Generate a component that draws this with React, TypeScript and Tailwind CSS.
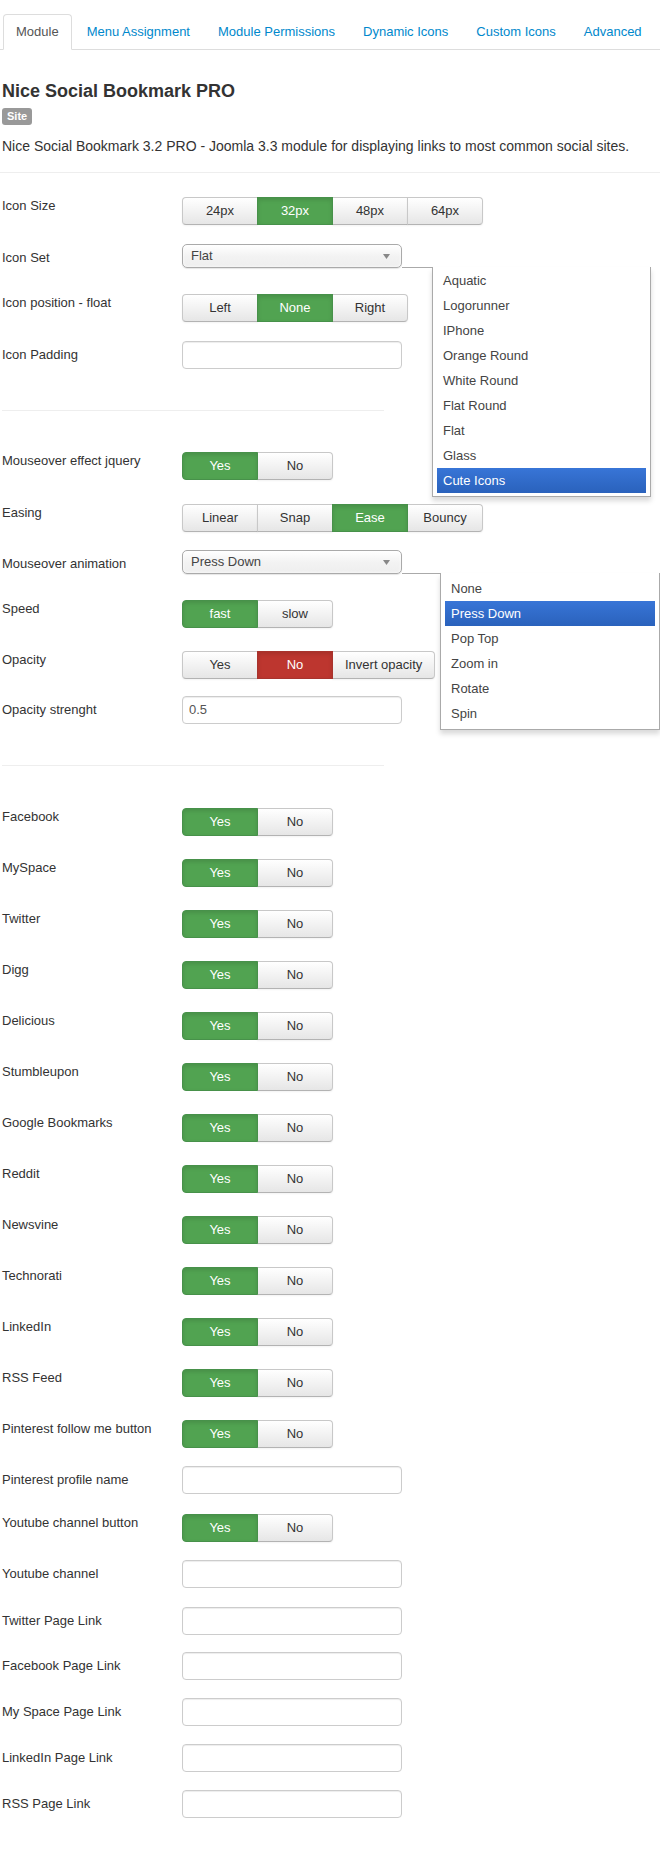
import clsx from 'clsx'

const tabs = ['Module', 'Menu Assignment', 'Module Permissions', 'Dynamic Icons', 'Custom Icons', 'Advanced']

const iconSets = ['Aquatic', 'Logorunner', 'IPhone', 'Orange Round', 'White Round', 'Flat Round', 'Flat', 'Glass', 'Cute Icons']
const animations = ['None', 'Press Down', 'Pop Top', 'Zoom in', 'Rotate', 'Spin']

const socials = [
  'Facebook',
  'MySpace',
  'Twitter',
  'Digg',
  'Delicious',
  'Stumbleupon',
  'Google Bookmarks',
  'Reddit',
  'Newsvine',
  'Technorati',
  'LinkedIn',
  'RSS Feed',
]

type Tone = 'green' | 'red'

function BtnGroup({ items, active, tone = 'green' }: { items: string[]; active: number; tone?: Tone }) {
  return (
    <div className="flex">
      {items.map((label, i) => {
        const on = i === active
        return (
          <button
            key={label}
            type="button"
            className={clsx(
              'h-[28px] min-w-[76px] border px-[12px] text-[13px] leading-[18px]',
              i > 0 && '-ml-px',
              i === 0 && 'rounded-l-[4px]',
              i === items.length - 1 && 'rounded-r-[4px]',
              !on &&
                'border-[#c8c8c8] border-b-[#b3b3b3] bg-linear-to-b from-white to-[#e6e6e6] text-[#333] shadow-[0_1px_2px_rgba(0,0,0,0.05)]',
              on && tone === 'green' && 'relative border-[#47914a] bg-[#51a351] text-white shadow-[inset_0_2px_4px_rgba(0,0,0,0.12)]',
              on && tone === 'red' && 'relative border-[#a8332d] bg-[#bd362f] text-white shadow-[inset_0_2px_4px_rgba(0,0,0,0.12)]',
            )}
          >
            {label}
          </button>
        )
      })}
    </div>
  )
}

function TextInput({ value = '' }: { value?: string }) {
  return (
    <input
      readOnly
      value={value}
      className="h-[28px] w-[220px] rounded-[4px] border border-[#ccc] bg-white px-[6px] text-[13px] text-[#555] shadow-[inset_0_1px_1px_rgba(0,0,0,0.075)] outline-none"
    />
  )
}

function Select({ value }: { value: string }) {
  return (
    <div className="relative h-[24px] w-[220px] rounded-[5px] border border-[#aaa] bg-linear-to-b from-white via-[#f3f3f3] to-[#eee] px-[8px] text-[13px] leading-[22px] text-[#444] shadow-[inset_0_0_3px_white,0_1px_1px_rgba(0,0,0,0.1)]">
      {value}
      <svg className="absolute right-[11px] top-[9px]" width="7" height="5" viewBox="0 0 7 5">
        <path d="M0 0h7L3.5 5z" fill="#888" />
      </svg>
    </div>
  )
}

function DropList({ items, selected, className }: { items: string[]; selected: string; className: string }) {
  return (
    <div
      className={clsx(
        'absolute z-10 border-x border-b border-[#aaa] bg-white shadow-[0_4px_5px_rgba(0,0,0,0.15)]',
        className,
      )}
    >
      <ul className="px-[4px] pb-[3px]">
        {items.map((it) => (
          <li
            key={it}
            className={clsx(
              'h-[25px] px-[6px] py-[5px] text-[13px] leading-[15px]',
              it === selected ? 'bg-linear-to-b from-[#3875d7] to-[#2a62bc] text-white' : 'text-[#444]',
            )}
          >
            {it}
          </li>
        ))}
      </ul>
    </div>
  )
}

function Row({
  label,
  h,
  inset,
  children,
}: {
  label: string
  h: string
  inset?: boolean
  children: React.ReactNode
}) {
  return (
    <div className={clsx('flex items-start', h)}>
      <div className={clsx('w-[180px] shrink-0 text-[13px] leading-[18px] text-[#333]', inset && 'pt-[5px]')}>
        {label}
      </div>
      <div className="relative">{children}</div>
    </div>
  )
}

const yesNo = ['Yes', 'No']

export default function App() {
  return (
    <div className="min-h-[1861px] bg-white px-[2px] pt-[14px] font-[Liberation_Sans,Arial,Helvetica,sans-serif] text-[13px] text-[#333]">
      {/* tabs */}
      <ul className="-mx-[2px] flex border-b border-[#ddd] pl-[3px]">
        {tabs.map((t, i) => (
          <li key={t} className="-mb-px mr-[2px]">
            <span
              className={clsx(
                'block rounded-t-[4px] border px-[12px] py-[8px] leading-[18px]',
                i === 0 ? 'border-[#ddd] border-b-white bg-white text-[#555]' : 'border-transparent text-[#0088cc]',
              )}
            >
              {t}
            </span>
          </li>
        ))}
      </ul>

      <h3 className="mt-[31px] text-[18px] font-bold leading-[20px] text-[#333]">Nice Social Bookmark PRO</h3>
      <span className="mt-[7px] inline-block h-[17px] rounded-[3px] bg-[#999] px-[5px] text-[11px] font-bold leading-[17px] text-white">
        Site
      </span>
      <p className="mt-[11px] text-[14px] leading-[18px]">
        Nice Social Bookmark 3.2 PRO - Joomla 3.3 module for displaying links to most common social sites.
      </p>
      <div className="-mx-[2px] mt-[17px] border-t border-[#eee]" />

      {/* section 1 */}
      <div className="pt-[24px]">
        <Row label="Icon Size" h="h-[47px]">
          <BtnGroup items={['24px', '32px', '48px', '64px']} active={1} />
        </Row>
        <Row label="Icon Set" h="h-[50px]" inset>
          <Select value="Flat" />
          <div className="absolute left-[220px] top-[23px] h-px w-[30px] bg-[#aaa]" />
          <DropList items={iconSets} selected="Cute Icons" className="left-[250px] top-[23px] w-[219px] pt-px" />
        </Row>
        <Row label="Icon position - float" h="h-[47px]">
          <BtnGroup items={['Left', 'None', 'Right']} active={1} />
        </Row>
        <Row label="Icon Padding" h="h-[46px]" inset>
          <TextInput />
        </Row>
      </div>
      <div className="mt-[23px] w-[382px] border-t border-[#eee]" />

      {/* section 2 */}
      <div className="pt-[41px]">
        <Row label="Mouseover effect jquery" h="h-[52px]">
          <BtnGroup items={yesNo} active={0} />
        </Row>
        <Row label="Easing" h="h-[46px]">
          <BtnGroup items={['Linear', 'Snap', 'Ease', 'Bouncy']} active={2} />
        </Row>
        <Row label="Mouseover animation" h="h-[50px]" inset>
          <Select value="Press Down" />
          <div className="absolute left-[220px] top-[23px] h-px w-[38px] bg-[#aaa]" />
          <DropList
            items={animations}
            selected="Press Down"
            className="left-[258px] top-[23px] w-[220px] pt-[3px]"
          />
        </Row>
        <Row label="Speed" h="h-[51px]">
          <BtnGroup items={['fast', 'slow']} active={0} />
        </Row>
        <Row label="Opacity" h="h-[45px]">
          <BtnGroup items={['Yes', 'No', 'Invert opacity']} active={1} tone="red" />
        </Row>
        <Row label="Opacity strenght" h="h-[46px]" inset>
          <TextInput value="0.5" />
        </Row>
      </div>
      <div className="mt-[23px] w-[382px] border-t border-[#eee]" />

      {/* section 3 */}
      <div className="pt-[42px]">
        {socials.map((s) => (
          <Row key={s} label={s} h="h-[51px]">
            <BtnGroup items={yesNo} active={0} />
          </Row>
        ))}
        <Row label="Pinterest follow me button" h="h-[46px]">
          <BtnGroup items={yesNo} active={0} />
        </Row>
        <Row label="Pinterest profile name" h="h-[48px]" inset>
          <TextInput />
        </Row>
        <Row label="Youtube channel button" h="h-[46px]">
          <BtnGroup items={yesNo} active={0} />
        </Row>
        <Row label="Youtube channel" h="h-[47px]" inset>
          <TextInput />
        </Row>
        <Row label="Twitter Page Link" h="h-[45px]" inset>
          <TextInput />
        </Row>
        <Row label="Facebook Page Link" h="h-[46px]" inset>
          <TextInput />
        </Row>
        <Row label="My Space Page Link" h="h-[46px]" inset>
          <TextInput />
        </Row>
        <Row label="LinkedIn Page Link" h="h-[46px]" inset>
          <TextInput />
        </Row>
        <Row label="RSS Page Link" h="h-[46px]" inset>
          <TextInput />
        </Row>
      </div>
    </div>
  )
}
